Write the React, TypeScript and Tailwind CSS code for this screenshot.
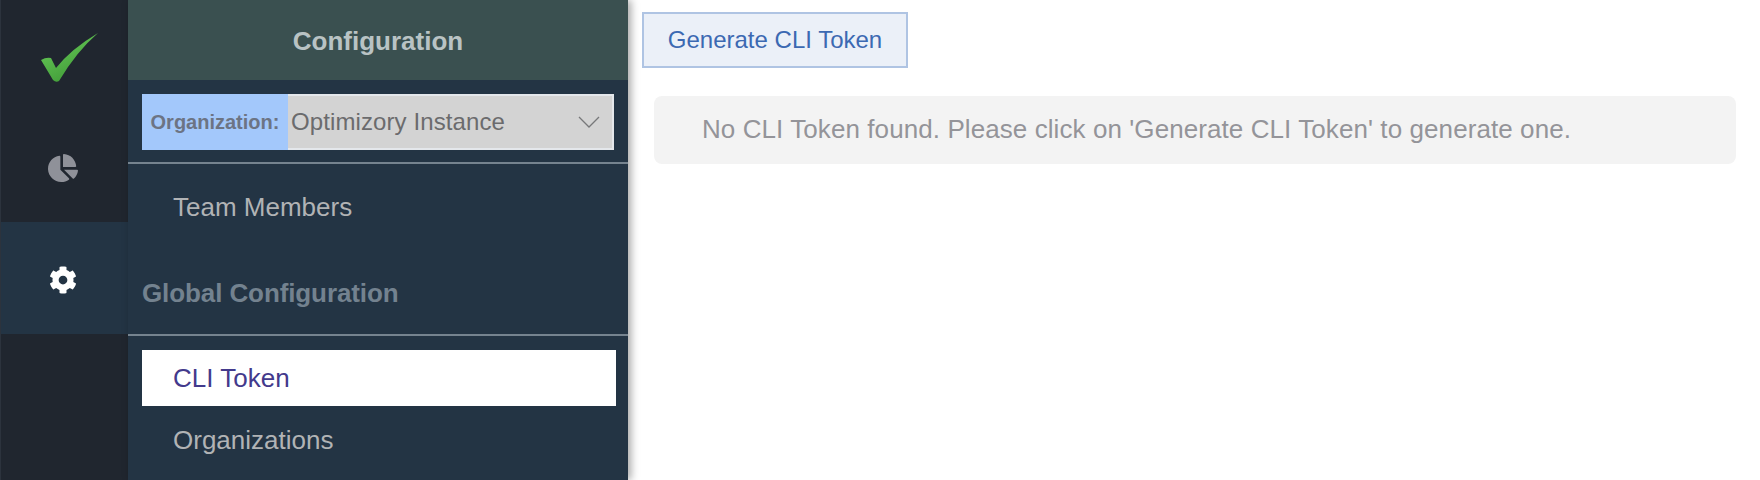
import { FaChartPie, FaCog } from "react-icons/fa";

export default function App() {
  return (
    <div className="flex h-[480px] w-[1760px] overflow-hidden bg-white font-['Liberation_Sans',Arial,sans-serif]">
      <div className="flex w-[128px] shrink-0 flex-col border-l border-[#2c333d] bg-[#20262f]">
        <div className="flex h-[111px] items-center justify-center pl-[12px]">
          <svg width="58" height="50" viewBox="0 0 58 50" className="mt-[5px] mr-[1px]">
            <defs>
              <linearGradient id="ck" x1="0" y1="0" x2="0.6" y2="1">
                <stop offset="0" stopColor="#6fd25e" />
                <stop offset="1" stopColor="#3f9a37" />
              </linearGradient>
            </defs>
            <path d="M0 27 Q5 24 10 25 L15 35 Q30 16 57 0 Q36 18 18 48 Q15 50 12 47 Z" fill="url(#ck)" />
          </svg>
        </div>
        <div className="flex h-[111px] items-center justify-center">
          <FaChartPie className="mt-[3px] mr-[3px] h-[30px] w-[30px] text-[#8f9199]" />
        </div>
        <div className="flex h-[112px] items-center justify-center bg-[#233444]">
          <FaCog className="mt-[3px] mr-[4px] h-[28px] w-[28px] text-white" />
        </div>
      </div>
      <div className="relative z-10 flex w-[500px] shrink-0 flex-col bg-[#233444] shadow-[3px_0_8px_rgba(0,0,0,0.35)]">
        <div className="flex h-[80px] items-center justify-center bg-[#3a5050] pt-[2px] text-[26px] font-bold text-[#b9c3c4]">
          Configuration
        </div>
        <div className="px-[14px] pt-[14px] pb-[12px]">
          <div className="flex h-[56px] w-[472px] border-2 border-l-0 border-[#e4e7eb] bg-[#d3d3d3]">
            <div className="my-[-2px] flex w-[146px] items-center justify-center bg-[#a3c8fb] text-[20px] font-bold text-[#6c7484]">
              Organization:
            </div>
            <div className="flex flex-1 items-center justify-between pr-[12px] pl-[3px] text-[24px] tracking-[0.1px] text-[#6b6b6d]">
              <span>Optimizory Instance</span>
              <svg width="22" height="12" viewBox="0 0 22 12" fill="none" stroke="#77787a" strokeWidth="1.3">
                <path d="M1 1 L11 11 L21 1" />
              </svg>
            </div>
          </div>
        </div>
        <div className="h-[2px] bg-[#75838f]" />
        <div className="mt-[15px] flex h-[56px] items-center px-[45px] text-[26px] text-[#b1b3b5]">Team Members</div>
        <div className="mt-[30px] flex h-[56px] items-center px-[14px] text-[26px] font-bold tracking-[-0.1px] text-[#73828f]">
          Global Configuration
        </div>
        <div className="mt-[13px] h-[2px] bg-[#75838f]" />
        <div className="mx-[14px] mt-[14px] flex h-[56px] w-[474px] items-center bg-white pl-[31px] text-[26px] text-[#433a8c]">
          CLI Token
        </div>
        <div className="mt-[6px] flex h-[56px] items-center px-[45px] text-[26px] text-[#b1b3b5]">Organizations</div>
      </div>
      <div className="flex-1 pt-[12px] pr-[24px] pl-[14px]">
        <button className="flex h-[56px] w-[266px] items-center justify-center border-2 border-[#afc4e3] bg-[#ebf0f8] text-[24px] text-[#3c69b2]">
          Generate CLI Token
        </button>
        <div className="mt-[28px] ml-[12px] flex h-[68px] items-center rounded-[8px] bg-[#f3f3f3] pb-[1px] pl-[48px] text-[26px] tracking-[0.08px] text-[#949499]">
          No CLI Token found. Please click on 'Generate CLI Token' to generate one.
        </div>
      </div>
    </div>
  );
}
